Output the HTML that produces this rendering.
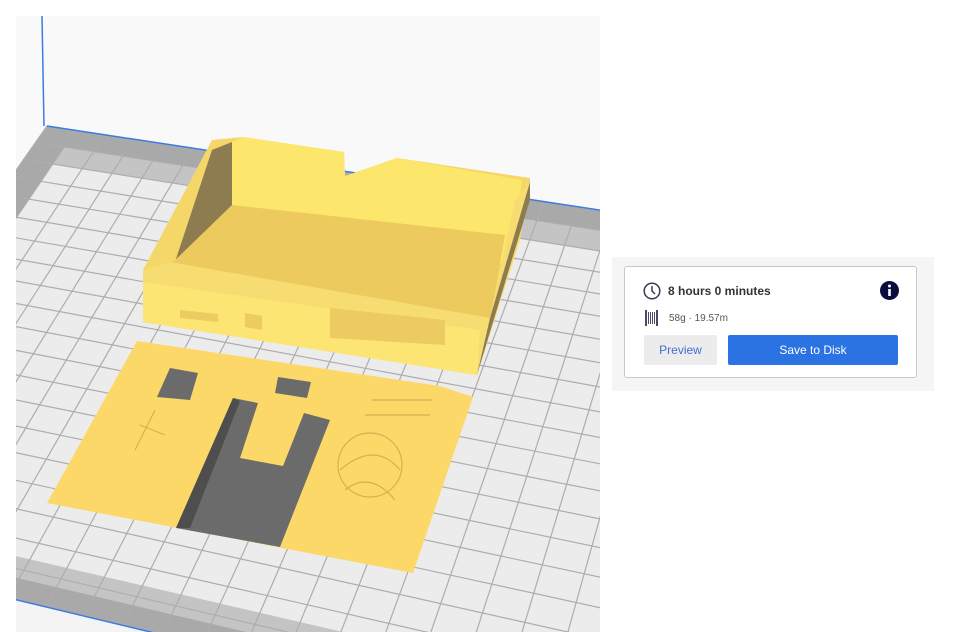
<!DOCTYPE html>
<html><head><meta charset="utf-8"><style>
html,body{margin:0;width:954px;height:632px;overflow:hidden}
body{background:#fff;position:relative;font-family:"Liberation Sans",sans-serif}
#vp{position:absolute;left:16px;top:16px;width:584px;height:616px;overflow:hidden;background:#f9f9f9}
#vp svg{display:block}
#panel{position:absolute;left:612px;top:257px;width:322px;height:134px;background:#f5f5f5}
#card{position:absolute;left:12px;top:9px;width:291px;height:110px;background:#fff;border:1px solid #c8c8c8;border-radius:3px}
.t1{position:absolute;left:43px;top:17px;font-size:12px;font-weight:bold;color:#333}
.t2{position:absolute;left:44px;top:46px;font-size:10px;color:#555}
.b1{position:absolute;left:19px;top:68px;width:73px;height:30px;background:#ececec;color:#3f6fd0;font-size:12px;text-align:center;line-height:30px;border-radius:2px}
.b2{position:absolute;left:103px;top:68px;width:170px;height:30px;background:#2b73e2;color:#fff;font-size:12px;text-align:center;line-height:30px;border-radius:2px}
</style></head><body>
<div id="vp"><svg id="sv" width="584" height="616" viewBox="16 16 584 616" xmlns="http://www.w3.org/2000/svg">
<g id="grid"></g>
<line x1="42" y1="16" x2="44" y2="126" stroke="#3c7be0" stroke-width="1.5"/>
<!-- box -->
<polygon points="143,270 212,140 243,137 344,152 345,176 397,158 530,178 530,200 477,375 143,322" fill="#f5d769"/>
<polygon points="212,150 232,142 232,215 210,265 175,270 175,262" fill="#8c7c4f"/>
<polygon points="232,142 243,137 344,152 345,176 397,158 522,180 510,265 232,205" fill="#fde66c"/>
<polygon points="232,205 505,235 490,320 170,265" fill="#ecca5e"/>
<polygon points="143,270 170,262 490,318 515,200 530,182 520,240 477,375 143,322" fill="#f7dc72"/>
<polygon points="143,282 480,330 477,375 143,322" fill="#fde574"/>
<polygon points="490,318 530,182 530,200 477,375" fill="#8c7c4f"/>
<polygon points="330,308 445,320 445,345 330,338" fill="#eccb61"/>
<polygon points="180,310 218,314 218,322 180,318" fill="#eccb61"/>
<polygon points="245,313 262,316 262,330 245,327" fill="#eccb61"/>
<!-- lower plate -->
<polygon points="137,341 440,386 473,397 413,573 47,503" fill="#fcd869"/>
<polygon points="233,398 258,403 240,458 283,466 304,413 330,420 280,547 176,528" fill="#6b6b6b"/>
<polygon points="233,398 240,401 190,528 176,528" fill="#4e4e4e"/>
<polygon points="170,368 198,373 190,400 157,397" fill="#6b6b6b"/>
<polygon points="278,377 311,382 307,398 275,393" fill="#6b6b6b"/>
<g stroke="#c9a84a" stroke-width="1.2" fill="none" opacity=".8">
<circle cx="370" cy="465" r="32"/><path d="M345 490 Q370 470 395 500 M340 470 Q375 440 400 470"/>
<path d="M372 400 h60 M365 415 h65 M135 450 l20 -40 M140 425 l25 10"/>
</g>
</svg></div>
<div id="panel"><div id="card">
<svg style="position:absolute;left:18px;top:15px" width="18" height="18" viewBox="0 0 18 18"><circle cx="9" cy="9" r="7.8" fill="none" stroke="#3a3a55" stroke-width="1.5"/><path d="M9 4v5l3 3" fill="none" stroke="#3a3a55" stroke-width="1.5"/></svg>
<div class="t1">8 hours 0 minutes</div>
<svg style="position:absolute;left:255px;top:14px" width="19" height="19" viewBox="0 0 19 19"><circle cx="9.5" cy="9.5" r="9.5" fill="#0b0b3e"/><circle cx="9.5" cy="5" r="1.5" fill="#fff"/><rect x="8.2" y="8" width="2.6" height="7" fill="#fff"/></svg>
<svg style="position:absolute;left:20px;top:43px" width="14" height="16" viewBox="0 0 14 16"><g fill="#4a4a66"><rect x="0" y="0" width="2" height="16"/><rect x="3" y="2" width="1" height="12"/><rect x="5" y="2" width="1" height="12"/><rect x="7" y="2" width="1" height="12"/><rect x="9" y="2" width="1" height="12"/><rect x="11" y="0" width="2" height="16"/></g></svg>
<div class="t2">58g · 19.57m</div>
<div class="b1">Preview</div><div class="b2">Save to Disk</div>
</div></div>
<script>
(function(){
var x0=47,y0=126,x1=980,y1=268,x2=925,y2=818,x3=-241,y3=538;
var dx1=x1-x2,dx2=x3-x2,dx3=x0-x1+x2-x3,dy1=y1-y2,dy2=y3-y2,dy3=y0-y1+y2-y3;
var den=dx1*dy2-dy1*dx2,g=(dx3*dy2-dy3*dx2)/den,h=(dx1*dy3-dy1*dx3)/den;
var a=x1-x0+g*x1,b=x3-x0+h*x3,c=x0,d=y1-y0+g*y1,e=y3-y0+h*y3,f=y0;
function Q(u,v){var w=g*u+h*v+1;return [((a*u+b*v+c)/w).toFixed(1),((d*u+e*v+f)/w).toFixed(1)];}
function P(u,v){return Q(u,v).join(",");}
var NU=28,NV=20,s="";
function poly(u0,v0,u1,v1,f){return '<polygon points="'+P(u0,v0)+' '+P(u1,v0)+' '+P(u1,v1)+' '+P(u0,v1)+'" fill="'+f+'"/>';}
function ln(p,q,col,wd){return '<line x1="'+p[0]+'" y1="'+p[1]+'" x2="'+q[0]+'" y2="'+q[1]+'" stroke="'+col+'" stroke-width="'+wd+'"/>';}
s+=poly(0,0,1,1,"#a9a9a9");
s+=poly(1/NU,1/NV,1,(NV-0.7)/NV,"#c4c4c4");
s+=poly(1/NU,2/NV,1,(NV-1.4)/NV,"#ececec");
for(var i=0;i<=NU;i++)s+=ln(Q(i/NU,0),Q(i/NU,1),"#adadad",1.2);
for(var j=0;j<=NV;j++)s+=ln(Q(0,j/NV),Q(1,j/NV),"#adadad",1.2);
s+=ln(Q(0,0),Q(1,0),"#3c7be0",1.5);
var p=Q(0,1),q=Q(1,1);
s+='<polygon points="'+p[0]+','+p[1]+' '+q[0]+','+q[1]+' 1000,1100 -300,1100" fill="#f4f4f4"/>'+ln(p,q,"#3c7be0",1.5);
document.getElementById("grid").innerHTML=s;
})();
</script>
</body></html>
